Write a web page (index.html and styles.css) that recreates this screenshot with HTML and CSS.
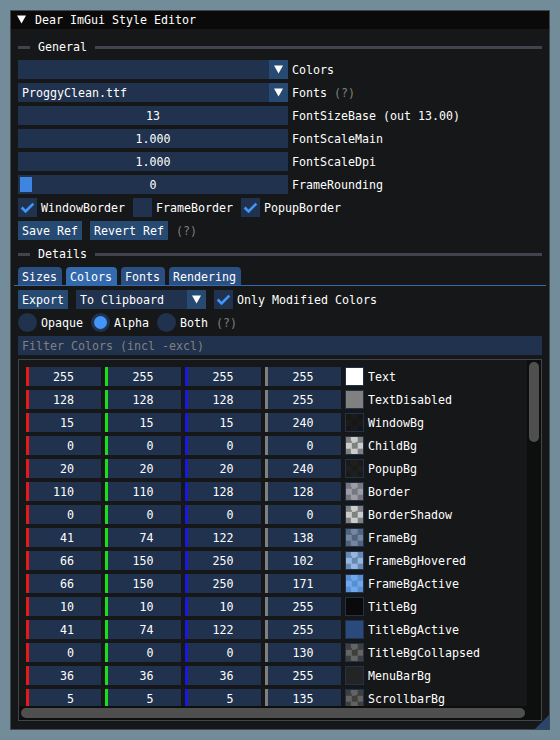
FILE: index.html
```html
<!DOCTYPE html>
<html>
<head>
<meta charset="utf-8">
<link rel="stylesheet" href="styles.css">
</head>
<body>
<div class="window">
  <div class="titlebar">
    <svg class="tri" viewBox="0 0 19 18" width="19" height="18"><polygon points="5,4.6 14,4.6 9.5,12.4" fill="#fff"/></svg>
    <span class="title">Dear ImGui Style Editor</span>
  </div>
  <div class="content">
    <div class="septext"><span class="sepline short"></span><span class="txt">General</span><span class="sepline long"></span></div>

    <div class="row">
      <div class="frame combo w270"><span class="ctext"></span><span class="arrowbtn"><svg viewBox="0 0 19 19" width="19" height="19"><polygon points="5,5.6 14,5.6 9.5,13.4" fill="#fff"/></svg></span></div>
      <span class="txt">Colors</span>
    </div>
    <div class="row">
      <div class="frame combo w270"><span class="ctext">ProggyClean.ttf</span><span class="arrowbtn"><svg viewBox="0 0 19 19" width="19" height="19"><polygon points="5,5.6 14,5.6 9.5,13.4" fill="#fff"/></svg></span></div>
      <span class="txt">Fonts <span class="dim">(?)</span></span>
    </div>
    <div class="row">
      <div class="frame slider w270">13</div>
      <span class="txt">FontSizeBase (out 13.00)</span>
    </div>
    <div class="row">
      <div class="frame slider w270">1.000</div>
      <span class="txt">FontScaleMain</span>
    </div>
    <div class="row">
      <div class="frame slider w270">1.000</div>
      <span class="txt">FontScaleDpi</span>
    </div>
    <div class="row">
      <div class="frame slider w270"><span class="grab"></span>0</div>
      <span class="txt">FrameRounding</span>
    </div>

    <div class="row items">
      <div class="item"><span class="check"><svg viewBox="0 0 19 19" width="19" height="19"><polyline points="3.65,9.5 7.55,13.4 15.35,5.6" fill="none" stroke="#4296fa" stroke-width="2.6"/></svg></span><span class="txt">WindowBorder</span></div>
      <div class="item"><span class="check"></span><span class="txt">FrameBorder</span></div>
      <div class="item"><span class="check"><svg viewBox="0 0 19 19" width="19" height="19"><polyline points="3.65,9.5 7.55,13.4 15.35,5.6" fill="none" stroke="#4296fa" stroke-width="2.6"/></svg></span><span class="txt">PopupBorder</span></div>
    </div>

    <div class="row items">
      <span class="button">Save Ref</span>
      <span class="button">Revert Ref</span>
      <span class="txt dim">(?)</span>
    </div>

    <div class="septext"><span class="sepline short"></span><span class="txt">Details</span><span class="sepline long"></span></div>

    <div class="tabbar">
      <span class="tab">Sizes</span>
      <span class="tab active">Colors</span>
      <span class="tab">Fonts</span>
      <span class="tab">Rendering</span>
    </div>

    <div class="row items">
      <span class="button">Export</span>
      <div class="frame combo w130"><span class="ctext">To Clipboard</span><span class="arrowbtn"><svg viewBox="0 0 19 19" width="19" height="19"><polygon points="5,5.6 14,5.6 9.5,13.4" fill="#fff"/></svg></span></div>
      <div class="item"><span class="check"><svg viewBox="0 0 19 19" width="19" height="19"><polyline points="3.65,9.5 7.55,13.4 15.35,5.6" fill="none" stroke="#4296fa" stroke-width="2.6"/></svg></span><span class="txt">Only Modified Colors</span></div>
    </div>

    <div class="row items">
      <div class="item"><span class="radio"></span><span class="txt">Opaque</span></div>
      <div class="item"><span class="radio on"></span><span class="txt">Alpha</span></div>
      <div class="item"><span class="radio"></span><span class="txt">Both</span></div>
      <span class="txt dim">(?)</span>
    </div>

    <div class="frame filter">Filter Colors (incl -excl)</div>

    <div class="child">
      <div class="viewport">
        <div class="list">
          <div class="crow"><span class="comp r">255</span><span class="comp g">255</span><span class="comp b">255</span><span class="comp a">255</span><span class="swatch" style="--a:#ffffff;--b:#ffffff"></span><span class="txt">Text</span></div>
          <div class="crow"><span class="comp r">128</span><span class="comp g">128</span><span class="comp b">128</span><span class="comp a">255</span><span class="swatch" style="--a:#808080;--b:#808080"></span><span class="txt">TextDisabled</span></div>
          <div class="crow"><span class="comp r"> 15</span><span class="comp g"> 15</span><span class="comp b"> 15</span><span class="comp a">240</span><span class="swatch" style="--a:#1a1a1a;--b:#161616"></span><span class="txt">WindowBg</span></div>
          <div class="crow"><span class="comp r">  0</span><span class="comp g">  0</span><span class="comp b">  0</span><span class="comp a">  0</span><span class="swatch" style="--a:#cccccc;--b:#808080"></span><span class="txt">ChildBg</span></div>
          <div class="crow"><span class="comp r"> 20</span><span class="comp g"> 20</span><span class="comp b"> 20</span><span class="comp a">240</span><span class="swatch" style="--a:#1f1f1f;--b:#1a1a1a"></span><span class="txt">PopupBg</span></div>
          <div class="crow"><span class="comp r">110</span><span class="comp g">110</span><span class="comp b">128</span><span class="comp a">128</span><span class="swatch" style="--a:#9d9da6;--b:#777780"></span><span class="txt">Border</span></div>
          <div class="crow"><span class="comp r">  0</span><span class="comp g">  0</span><span class="comp b">  0</span><span class="comp a">  0</span><span class="swatch" style="--a:#cccccc;--b:#808080"></span><span class="txt">BorderShadow</span></div>
          <div class="crow"><span class="comp r"> 41</span><span class="comp g"> 74</span><span class="comp b">122</span><span class="comp a">138</span><span class="swatch" style="--a:#7486a0;--b:#51637d"></span><span class="txt">FrameBg</span></div>
          <div class="crow"><span class="comp r"> 66</span><span class="comp g">150</span><span class="comp b">250</span><span class="comp a">102</span><span class="swatch" style="--a:#95b6de;--b:#6789b1"></span><span class="txt">FrameBgHovered</span></div>
          <div class="crow"><span class="comp r"> 66</span><span class="comp g">150</span><span class="comp b">250</span><span class="comp a">171</span><span class="swatch" style="--a:#70a8eb;--b:#568fd2"></span><span class="txt">FrameBgActive</span></div>
          <div class="crow"><span class="comp r"> 10</span><span class="comp g"> 10</span><span class="comp b"> 10</span><span class="comp a">255</span><span class="swatch" style="--a:#0a0a0a;--b:#0a0a0a"></span><span class="txt">TitleBg</span></div>
          <div class="crow"><span class="comp r"> 41</span><span class="comp g"> 74</span><span class="comp b">122</span><span class="comp a">255</span><span class="swatch" style="--a:#294a7a;--b:#294a7a"></span><span class="txt">TitleBgActive</span></div>
          <div class="crow"><span class="comp r">  0</span><span class="comp g">  0</span><span class="comp b">  0</span><span class="comp a">130</span><span class="swatch" style="--a:#646464;--b:#3f3f3f"></span><span class="txt">TitleBgCollapsed</span></div>
          <div class="crow"><span class="comp r"> 36</span><span class="comp g"> 36</span><span class="comp b"> 36</span><span class="comp a">255</span><span class="swatch" style="--a:#242424;--b:#242424"></span><span class="txt">MenuBarBg</span></div>
          <div class="crow"><span class="comp r">  5</span><span class="comp g">  5</span><span class="comp b">  5</span><span class="comp a">135</span><span class="swatch" style="--a:#626262;--b:#3f3f3f"></span><span class="txt">ScrollbarBg</span></div>
        </div>
      </div>
      <div class="vscroll"><div class="vgrab"></div></div>
      <div class="hscroll"><div class="hgrab"></div></div>
      <div class="corner"></div>
    </div>
  </div>
  <span class="grip"></span>
</div>
</body>
</html>
```

FILE: styles.css
```css
* { box-sizing: border-box; }
html, body { margin: 0; padding: 0; }
body {
  width: 560px;
  height: 740px;
  overflow: hidden;
  background: #738c99;
  font-family: "DejaVu Sans Mono", "Liberation Mono", monospace;
  font-size: 11.63px;
  line-height: 13px;
  color: #ffffff;
}
.window {
  position: relative;
  margin: 10px 0 0 10px;
  width: 540px;
  height: 720px;
  border: 1px solid #42444d;
  background: #151718;
  display: flex;
  flex-direction: column;
}
.titlebar {
  flex: none;
  height: 18px;
  background: #0a0a0a;
  display: flex;
  align-items: center;
  padding-left: 1px;
}
.titlebar svg { display: block; }
.title { margin-left: 4px; padding-top: 1px; white-space: pre; }
.content {
  flex: 1;
  min-height: 0;
  display: flex;
  flex-direction: column;
  gap: 4px;
  padding: 8px 7px 8px 7px;
}
.txt { padding-top: 2px; white-space: pre; }
.septext {
  flex: none;
  height: 19px;
  display: flex;
  align-items: center;
  gap: 8px;
}
.sepline { height: 3px; background: #42434c; margin-top: 2px; }
.sepline.short { width: 12px; }
.sepline.long { flex: 1; }

.row {
  flex: none;
  height: 19px;
  display: flex;
  align-items: center;
  gap: 4px;
  white-space: pre;
}
.row.items { gap: 8px; }
.frame {
  height: 19px;
  background: #20324d;
  padding: 4px 4px 2px;
  white-space: pre;
}
.w270 { width: 270px; }
.w130 { width: 130px; }
.combo { display: flex; padding: 0; }
.combo .ctext { flex: 1; padding: 4px 4px 2px; }
.arrowbtn { width: 19px; height: 19px; background: #274a72; }
.arrowbtn svg { display: block; }
.slider { position: relative; text-align: center; }
.grab {
  position: absolute;
  left: 2px;
  top: 2px;
  width: 12px;
  height: 15px;
  background: #3d85e0;
}
.dim { color: #808080; }

.item { display: flex; align-items: center; gap: 4px; }
.check { width: 19px; height: 19px; background: #20324d; }
.check svg { display: block; }
.button {
  height: 19px;
  padding: 4px 4px 2px;
  background: #274a72;
}
.radio {
  width: 19px;
  height: 19px;
  border-radius: 50%;
  background: #20324d;
  display: flex;
  align-items: center;
  justify-content: center;
}
.radio.on::after {
  content: "";
  width: 13px;
  height: 13px;
  border-radius: 50%;
  background: #4296fa;
}

.tabbar {
  flex: none;
  height: 19px;
  margin: 0 -4px;
  padding: 0 4px;
  display: flex;
  align-items: flex-end;
  gap: 4px;
  border-bottom: 1px solid #3369ad;
}
.tab {
  height: 18px;
  padding: 4px 5px 0 4px;
  background: #2a4f80;
  border-radius: 4px 4px 0 0;
}
.tab.active { background: #3369ad; }

.filter { flex: none; color: #808080; }

.child {
  flex: 1;
  min-height: 0;
  border: 1px solid #42434c;
  display: grid;
  grid-template-columns: 1fr 14px;
  grid-template-rows: 1fr 14px;
}
.viewport {
  overflow: hidden;
  padding: 7px 0 0 7px;
  min-width: 0;
  min-height: 0;
}
.list { display: flex; flex-direction: column; gap: 4px; }
.crow {
  flex: none;
  height: 19px;
  display: flex;
  align-items: center;
  gap: 4px;
  white-space: pre;
}
.comp {
  width: 76px;
  height: 19px;
  padding-top: 4px;
  background: #20324d;
  text-align: center;
  white-space: pre;
}
.comp.r { width: 75px; box-shadow: inset 3px 0 0 #e81818; }
.comp.g { box-shadow: inset 3px 0 0 #18e018; }
.comp.b { box-shadow: inset 3px 0 0 #1818e0; }
.comp.a { box-shadow: inset 3px 0 0 #808080; }
.swatch {
  width: 19px;
  height: 19px;
  border: 1px solid #20324d;
  background: repeating-conic-gradient(var(--a) 0 25%, var(--b) 0 50%) 0 0 / 12.7px 12.7px;
  background-origin: border-box;
}
.vscroll { background: #0d0e0e; padding: 2px; }
.vgrab { height: 80px; border-radius: 5px; background: #4f4f4f; }
.hscroll { background: #0d0e0e; padding: 2px; }
.hgrab { height: 10px; border-radius: 5px; background: #4f4f4f; }
.corner { background: #0d0e0e; }

.grip {
  position: absolute;
  right: 0;
  bottom: 0;
  width: 14px;
  height: 14px;
  background: #284669;
  clip-path: polygon(100% 0, 100% 100%, 0 100%);
}
```
